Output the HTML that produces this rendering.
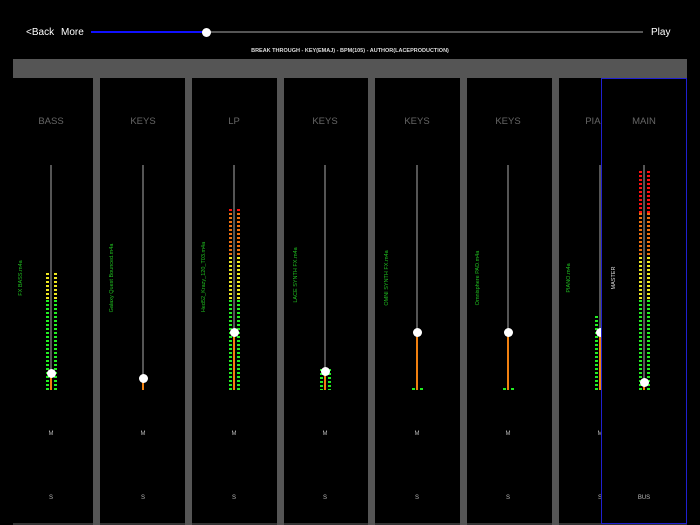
<!DOCTYPE html>
<html><head><style>
*{margin:0;padding:0;box-sizing:border-box}
body{width:700px;height:525px;background:#000;position:relative;overflow:hidden;font-family:"Liberation Sans",sans-serif;color:#fff}
.a{position:absolute}
.t{font-size:10px;color:#fff}
.div{position:absolute;top:78px;width:7px;height:447px;background:#555}
.nm{position:absolute;top:116px;width:80px;margin-left:-40px;text-align:center;font-size:9.5px;color:#666}
.trk{position:absolute;top:165px;width:2px;height:225px;margin-left:-1px;background:#555}
.or{position:absolute;width:2px;margin-left:-1px;background:#f08010}
.kn{position:absolute;width:9px;height:9px;border-radius:50%;background:#fff;margin:-4.5px 0 0 -4.5px}
.ms{position:absolute;width:20px;margin-left:-10px;text-align:center;font-size:6px;color:#bbb}
.vl{position:absolute;font-size:5.5px;color:#20c020;transform:rotate(-90deg);transform-origin:center;white-space:nowrap;width:90px;text-align:center;margin-left:-45px;height:8px;line-height:8px;margin-top:-4px}
.m{position:absolute;width:3px}
.g{background:repeating-linear-gradient(to bottom,#22ee22 0 2px,transparent 2px 4px)}
.y{background:repeating-linear-gradient(to bottom,#f0e820 0 2px,transparent 2px 4px)}
.o{background:repeating-linear-gradient(to bottom,#f07010 0 2px,transparent 2px 4px)}
.r{background:repeating-linear-gradient(to bottom,#ff1010 0 2px,transparent 2px 4px)}
</style></head><body>
<div class="a t" style="left:26px;top:27px">&lt;Back</div>
<div class="a t" style="left:61px;top:27px">More</div>
<div class="a" style="left:91px;top:31px;width:552px;height:2px;background:#555"></div>
<div class="a" style="left:91px;top:31px;width:115px;height:2px;background:#1010ff"></div>
<div class="kn" style="left:206px;top:32px"></div>
<div class="a t" style="left:651px;top:27px">Play</div>
<div class="a" style="left:200px;width:300px;top:48px;text-align:center;font-size:5.5px;font-weight:bold;color:#ddd">BREAK THROUGH - KEY(EMAJ) - BPM(105) - AUTHOR(LACEPRODUCTION)</div>
<div class="a" style="left:13px;top:59px;width:674px;height:19px;background:#555"></div>
<div class="a" style="left:13px;top:523px;width:674px;height:2px;background:#333"></div>
<div class="div" style="left:93px"></div>
<div class="div" style="left:185px"></div>
<div class="div" style="left:277px"></div>
<div class="div" style="left:368px"></div>
<div class="div" style="left:460px"></div>
<div class="div" style="left:552px"></div>

<!-- BASS -->
<div class="nm" style="left:51px">BASS</div>
<div class="m y" style="left:46px;top:273px;height:27px"></div><div class="m y" style="left:54px;top:273px;height:27px"></div>
<div class="m g" style="left:46px;top:300px;height:90px"></div><div class="m g" style="left:54px;top:300px;height:90px"></div>
<div class="trk" style="left:51px"></div><div class="or" style="left:51px;top:373px;height:17px"></div><div class="kn" style="left:51px;top:373px"></div>
<div class="vl" style="left:21px;top:278px">FX BASS.m4a</div>
<div class="ms" style="left:51px;top:431px">M</div><div class="ms" style="left:51px;top:495px">S</div>

<!-- KEYS -->
<div class="nm" style="left:143px">KEYS</div>
<div class="trk" style="left:143px"></div><div class="or" style="left:143px;top:378px;height:12px"></div><div class="kn" style="left:143px;top:378px"></div>
<div class="vl" style="left:112px;top:278px">Galaxy Quest Bounced.m4a</div>
<div class="ms" style="left:143px;top:431px">M</div><div class="ms" style="left:143px;top:495px">S</div>

<!-- LP -->
<div class="nm" style="left:234px">LP</div>
<div class="m r" style="left:229px;top:209px;height:4px"></div><div class="m r" style="left:237px;top:209px;height:4px"></div>
<div class="m o" style="left:229px;top:213px;height:44px"></div><div class="m o" style="left:237px;top:213px;height:44px"></div>
<div class="m y" style="left:229px;top:257px;height:43px"></div><div class="m y" style="left:237px;top:257px;height:43px"></div>
<div class="m g" style="left:229px;top:300px;height:90px"></div><div class="m g" style="left:237px;top:300px;height:90px"></div>
<div class="trk" style="left:234px"></div><div class="or" style="left:234px;top:332px;height:58px"></div><div class="kn" style="left:234px;top:332px"></div>
<div class="vl" style="left:204px;top:277px">Hed52_Krazy_120_T03.m4a</div>
<div class="ms" style="left:234px;top:431px">M</div><div class="ms" style="left:234px;top:495px">S</div>

<!-- KEYS 4 -->
<div class="nm" style="left:325px">KEYS</div>
<div class="m g" style="left:320px;top:369px;height:21px"></div><div class="m g" style="left:328px;top:369px;height:21px"></div>
<div class="trk" style="left:325px"></div><div class="or" style="left:325px;top:371px;height:19px"></div><div class="kn" style="left:325px;top:371px"></div>
<div class="vl" style="left:296px;top:275px">LACE SYNTH FX.m4a</div>
<div class="ms" style="left:325px;top:431px">M</div><div class="ms" style="left:325px;top:495px">S</div>

<!-- KEYS 5 -->
<div class="nm" style="left:417px">KEYS</div>
<div class="m g" style="left:412px;top:388px;height:2px"></div><div class="m g" style="left:420px;top:388px;height:2px"></div>
<div class="trk" style="left:417px"></div><div class="or" style="left:417px;top:332px;height:58px"></div><div class="kn" style="left:417px;top:332px"></div>
<div class="vl" style="left:387px;top:278px">OMNI SYNTH FX.m4a</div>
<div class="ms" style="left:417px;top:431px">M</div><div class="ms" style="left:417px;top:495px">S</div>

<!-- KEYS 6 -->
<div class="nm" style="left:508px">KEYS</div>
<div class="m g" style="left:503px;top:388px;height:2px"></div><div class="m g" style="left:511px;top:388px;height:2px"></div>
<div class="trk" style="left:508px"></div><div class="or" style="left:508px;top:332px;height:58px"></div><div class="kn" style="left:508px;top:332px"></div>
<div class="vl" style="left:478px;top:278px">Omnisphere PAD.m4a</div>
<div class="ms" style="left:508px;top:431px">M</div><div class="ms" style="left:508px;top:495px">S</div>

<!-- PIANO -->
<div class="nm" style="left:600px">PIANO</div>
<div class="m g" style="left:595px;top:316px;height:74px"></div>
<div class="trk" style="left:600px"></div><div class="or" style="left:600px;top:332px;height:58px"></div><div class="kn" style="left:600px;top:332px"></div>
<div class="vl" style="left:569px;top:278px">PIANO.m4a</div>
<div class="ms" style="left:600px;top:431px">M</div><div class="ms" style="left:600px;top:495px">S</div>

<!-- MAIN -->
<div class="a" style="left:601px;top:78px;width:86px;height:446px;background:#000;border:1px solid #2020d0"></div>
<div class="nm" style="left:644px">MAIN</div>
<div class="m r" style="left:639px;top:171px;height:42px"></div><div class="m r" style="left:647px;top:171px;height:42px"></div>
<div class="m o" style="left:639px;top:213px;height:44px"></div><div class="m o" style="left:647px;top:213px;height:44px"></div>
<div class="m y" style="left:639px;top:257px;height:43px"></div><div class="m y" style="left:647px;top:257px;height:43px"></div>
<div class="m g" style="left:639px;top:300px;height:90px"></div><div class="m g" style="left:647px;top:300px;height:90px"></div>
<div class="trk" style="left:644px"></div><div class="or" style="left:644px;top:382px;height:8px"></div><div class="kn" style="left:644px;top:382px"></div>
<div class="vl" style="left:614px;top:278px;color:#ddd">MASTER</div>
<div class="ms" style="left:644px;top:495px">BUS</div>
</body></html>
